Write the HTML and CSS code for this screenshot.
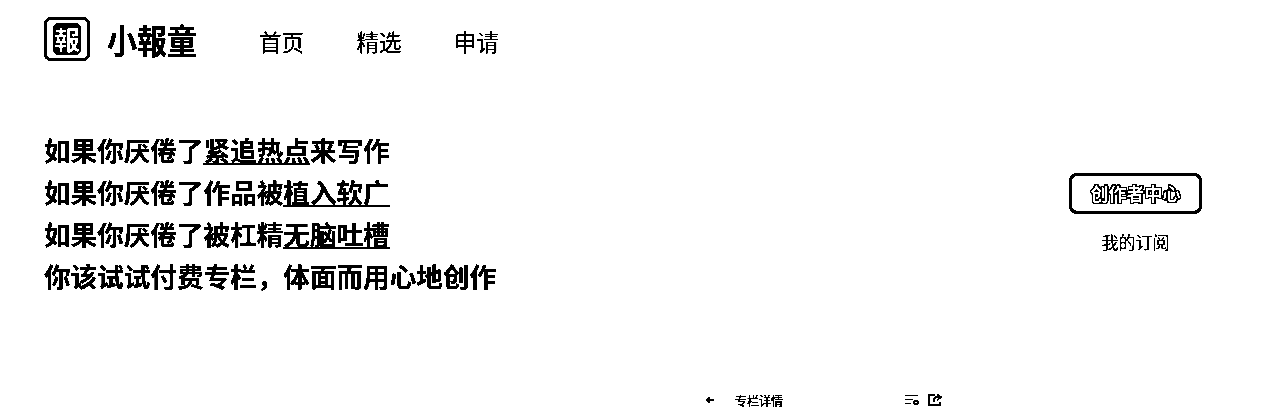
FILE: index.html
```html
<!DOCTYPE html>
<html lang="zh">
<head>
  <meta charset="UTF-8" />
  <title>小報童</title>
  <link rel="stylesheet" href="styles.css">
</head>
<body>
  <header class="header">
    <div class="logo">
      <span class="logo-mark"><span class="logo-mark-text">報</span></span>
      <span class="logo-name">小報童</span>
    </div>
    <nav class="nav">
      <a href="#">首页</a>
      <a href="#">精选</a>
      <a href="#">申请</a>
    </nav>
  </header>

  <section class="hero">
    <div class="slogan">
      <p>如果你厌倦了<u>紧追热点</u>来写作</p>
      <p>如果你厌倦了作品被<u>植入软广</u></p>
      <p>如果你厌倦了被杠精<u>无脑吐槽</u></p>
      <p>你该试试付费专栏，体面而用心地创作</p>
    </div>
    <div class="actions">
      <a class="btn" href="#">创作者中心</a>
      <a class="link" href="#">我的订阅</a>
    </div>
  </section>

  <div class="phone-bar">
    <svg class="icon-back" viewBox="0 0 10 10"><path d="M9 5H2M5 2L2 5l3 3" fill="none" stroke="#000" stroke-width="1.4"/></svg>
    <span class="phone-title">专栏详情</span>
    <svg class="icon" viewBox="0 0 14 12"><path d="M0 1.500h13M0 5.500h8M0 9.500h6" stroke="#000" stroke-width="1.500"/><circle cx="11" cy="8.500" r="2" fill="none" stroke="#000" stroke-width="1.500"/></svg>
    <svg class="icon" viewBox="0 0 14 12"><path d="M7 1H1v10h11V8M9 .5l4 2.800-4 2.800M13 3.300H8C6.500 3.300 6 5 6 7.500" fill="none" stroke="#000" stroke-width="1.500"/></svg>
  </div>
</body>
</html>
```

FILE: styles.css
```css
* {
  margin: 0;
  padding: 0;
  box-sizing: border-box;
}
html {
  background-color: #fff;
}
body {
  height: 408px;
  overflow: hidden;
  background-color: #fff;
  color: #000;
  font-family: "Noto Sans CJK SC", "Liberation Sans", sans-serif;
  filter: grayscale(1) brightness(0.72) contrast(50);
}
a {
  color: #000;
  text-decoration: none;
}
.header {
  display: flex;
  align-items: center;
  height: 78px;
  padding-left: 44px;
}
.logo {
  display: flex;
  align-items: center;
  gap: 17px;
  margin-right: 62px;
}
.logo-mark {
  display: flex;
  align-items: center;
  justify-content: center;
  width: 46px;
  height: 44px;
  border: 3px solid #000;
  border-radius: 7px;
}
.logo-mark-text {
  display: flex;
  align-items: center;
  justify-content: center;
  width: 28px;
  height: 32px;
  border-radius: 6px;
  background-color: #000;
  color: #fff;
  font-size: 26px;
  font-weight: 700;
  line-height: 1;
}
.logo-name {
  font-size: 30px;
  font-weight: 700;
  line-height: 1;
  transform: scaleY(1.12);
}
.nav {
  display: flex;
  gap: 52.500px;
  margin-top: 4px;
  font-size: 22.500px;
}
.hero {
  display: flex;
  justify-content: space-between;
  align-items: center;
  padding: 51px 78px 0 44px;
}
.slogan {
  font-size: 26.600px;
  font-weight: 700;
  line-height: 42px;
}
.slogan u {
  text-decoration-thickness: 2px;
  text-underline-offset: 2px;
}
.actions {
  display: flex;
  flex-direction: column;
  align-items: center;
  gap: 15px;
}
.btn {
  display: flex;
  align-items: center;
  justify-content: center;
  width: 133px;
  height: 41px;
  border: 3px solid #000;
  border-radius: 8px;
  color: #fff;
  font-size: 18px;
  font-weight: 700;
  text-shadow: 1px 0 #000, -1px 0 #000, 0 1px #000, 0 -1px #000, 1px 1px #000, -1px -1px #000, 1px -1px #000, -1px 1px #000;
}
.link {
  font-size: 17px;
}
.phone-bar {
  display: flex;
  align-items: center;
  height: 20px;
  margin-top: 93px;
  padding-left: 705px;
}
.icon-back {
  width: 10px;
  height: 10px;
  margin-right: 20px;
}
.phone-title {
  width: 170px;
  font-size: 12px;
  font-weight: 500;
}
.icon {
  width: 14px;
  height: 12px;
  margin-right: 9px;
}
```
